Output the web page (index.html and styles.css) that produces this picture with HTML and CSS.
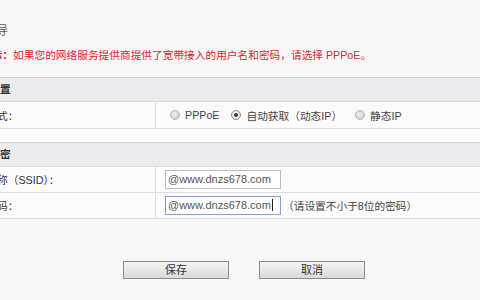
FILE: index.html
```html
<!DOCTYPE html>
<html lang="zh-CN">
<head>
<meta charset="utf-8">
<title>设置向导</title>
<link rel="stylesheet" href="styles.css">
</head>
<body>
<div class="page">
  <div class="title">设置向导</div>
  <div class="note"><b>提示：</b>如果您的网络服务提供商提供了宽带接入的用户名和密码，请选择 PPPoE。</div>

  <div class="section">
    <div class="head">上网设置</div>
    <div class="row r1">
      <div class="label">上网方式：</div>
      <div class="value radios">
        <span class="opt"><span class="radio"></span>PPPoE</span>
        <span class="opt"><span class="radio on"></span>自动获取（动态IP）</span>
        <span class="opt"><span class="radio"></span>静态IP</span>
      </div>
    </div>
    <div class="spacer"></div>
  </div>

  <div class="section">
    <div class="head">无线加密</div>
    <div class="row">
      <div class="label">无线名称（SSID）：</div>
      <div class="value"><div class="field">@www.dnzs678.com</div></div>
    </div>
    <div class="row">
      <div class="label">无线密码：</div>
      <div class="value"><div class="field focus">@www.dnzs678.com<span class="caret"></span></div><span class="hint">（请设置不小于8位的密码）</span></div>
    </div>
  </div>

  <div class="buttons">
    <div class="btn">保存</div>
    <div class="btn">取消</div>
  </div>
</div>
</body>
</html>
```

FILE: styles.css
```css
html, body {
  margin: 0;
  padding: 0;
  height: 100%;
  overflow: hidden;
  background: #f8f8f8;
}
body {
  font-family: "Liberation Sans", Arial, "Noto Sans CJK SC", sans-serif;
  font-size: 10.7px;
  color: #333;
}
.page {
  margin-left: -45px;
  width: calc(100% + 45px);
  padding-top: 24px;
}
.title {
  font-size: 12px;
  line-height: 14px;
  color: #555;
  padding-left: 5px;
}
.note {
  margin-top: 10px;
  margin-bottom: 15px;
  line-height: 14px;
  color: #e0242f;
  padding-left: 26px;
}
.note b {
  font-weight: bold;
}
.section {
  border-top: 1px solid #d2d2d4;
}
.head {
  height: 23px;
  line-height: 23px;
  background: #ebebee;
  font-weight: bold;
  color: #333;
  padding-left: 13px;
  border-bottom: 1px solid #dcdcde;
}
.section:first-of-type .head {
  height: 24px;
  line-height: 24px;
}
.row {
  display: grid;
  grid-template-columns: 201px 1fr;
  height: 25px;
  background: #fbfbfb;
  border-bottom: 1px solid #dedee0;
}
.row.r1 {
  height: 26px;
}
.label {
  padding-left: 10px;
  display: flex;
  align-items: center;
  color: #333;
  border-right: 1px solid #dedee0;
}
.value {
  display: flex;
  align-items: center;
  padding-left: 9px;
}
.radios {
  padding-left: 14px;
  color: #444;
}
.opt {
  display: inline-flex;
  align-items: center;
  margin-right: 12px;
}
.opt:nth-child(2) {
  margin-right: 13px;
}
.radio {
  width: 8px;
  height: 8px;
  border-radius: 50%;
  border: 1px solid #b4b4b4;
  background: radial-gradient(circle at 40% 35%, #eeeeee, #c8c8c8);
  margin-right: 5px;
  position: relative;
}
.radio.on {
  background: radial-gradient(circle at 40% 35%, #ffffff, #d8d8d8);
  border-color: #8a8a8a;
}
.radio.on::after {
  content: "";
  position: absolute;
  left: 2px;
  top: 2px;
  width: 4px;
  height: 4px;
  border-radius: 50%;
  background: #3a3a3a;
}
.spacer {
  height: 13px;
  background: #fcfcfc;
}
.field {
  box-sizing: border-box;
  width: 116px;
  height: 19px;
  border: 1px solid #bdbdbd;
  background: #fff;
  font-size: 11px;
  line-height: 17px;
  padding-left: 2px;
  color: #555;
  white-space: nowrap;
}
.field.focus {
  border-color: #7da2d6;
}
.caret {
  display: inline-block;
  width: 1px;
  height: 12px;
  background: #222;
  vertical-align: -2px;
  margin-left: 1px;
}
.hint {
  margin-left: 2px;
  color: #444;
}
.buttons {
  margin-top: 42px;
  display: flex;
  gap: 30px;
  padding-left: 168px;
}
.btn {
  box-sizing: border-box;
  width: 106px;
  height: 18px;
  border: 1px solid #8c8c8c;
  background: linear-gradient(#f6f6f6, #d9d9d9);
  text-align: center;
  line-height: 16px;
  font-size: 11px;
  color: #333;
}
```
